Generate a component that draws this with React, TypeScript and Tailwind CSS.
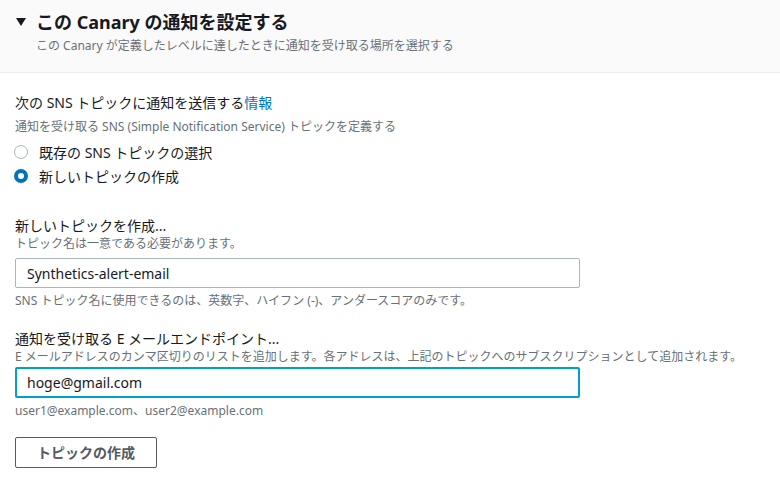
import { useState } from 'react';

const font = { fontFamily: '"Noto Sans", "Noto Sans CJK JP", sans-serif' };

function Radio({ checked, label, onClick }: { checked: boolean; label: string; onClick: () => void }) {
  return (
    <label className="flex h-6 cursor-pointer items-center" onClick={onClick}>
      <span
        className={
          checked
            ? 'ml-[14px] h-[14px] w-[14px] rounded-full border-[4px] border-[#0073bb] bg-white'
            : 'ml-[14px] h-[14px] w-[14px] rounded-full border border-[#aab7b8] bg-white'
        }
      />
      <span className="ml-[11px] text-[14px] text-[#16191f]">{label}</span>
    </label>
  );
}

export default function App() {
  const [mode, setMode] = useState<'existing' | 'new'>('new');
  const [topic, setTopic] = useState('Synthetics-alert-email');
  const [emails, setEmails] = useState('hoge@gmail.com');

  return (
    <div className="h-[480px] w-[780px] overflow-hidden bg-white" style={font}>
      {/* Header */}
      <div className="h-[73px] border-b border-[#eaeded] bg-[#fafafa] pl-4 pt-[9px]">
        <div className="flex items-center">
          <svg width="10" height="9" viewBox="0 0 10 9" className="mr-[10px]">
            <path d="M0 0h10L5 8z" fill="#16191f" />
          </svg>
          <h2 className="text-[18px] font-bold leading-[26px] text-[#16191f]">この Canary の通知を設定する</h2>
        </div>
        <p className="ml-[20px] mt-[2px] text-[12px] leading-[18px] text-[#687078]">
          この Canary が定義したレベルに達したときに通知を受け取る場所を選択する
        </p>
      </div>

      <div className="px-[15px] pt-[19px]">
        {/* SNS topic */}
        <div className="text-[14px] leading-[22px] text-[#16191f]">
          次の SNS トピックに通知を送信する<a className="text-[#0073bb]">情報</a>
        </div>
        <div className="mt-[4px] text-[12px] leading-[18px] text-[#687078]">
          通知を受け取る SNS (Simple Notification Service) トピックを定義する
        </div>
        <div className="-ml-[15px] mt-[4px] flex flex-col">
          <Radio checked={mode === 'existing'} label="既存の SNS トピックの選択" onClick={() => setMode('existing')} />
          <Radio checked={mode === 'new'} label="新しいトピックの作成" onClick={() => setMode('new')} />
        </div>

        {/* New topic */}
        <div className="mt-[28px] text-[14px] leading-[20px] text-[#16191f]">新しいトピックを作成...</div>
        <div className="text-[12px] leading-[16px] text-[#687078]">トピック名は一意である必要があります。</div>
        <input
          value={topic}
          onChange={(e) => setTopic(e.target.value)}
          className="mt-[6px] h-[30px] w-[565px] rounded-[2px] border border-[#aab7b8] px-[11px] text-[14px] text-[#16191f] outline-none"
        />
        <div className="mt-[5px] text-[12px] leading-[16px] text-[#687078]">
          SNS トピック名に使用できるのは、英数字、ハイフン (-)、アンダースコアのみです。
        </div>

        {/* Email endpoints */}
        <div className="mt-[20px] text-[14px] leading-[20px] text-[#16191f]">通知を受け取る E メールエンドポイント...</div>
        <div className="text-[12px] leading-[16px] text-[#687078]">
          E メールアドレスのカンマ区切りのリストを追加します。各アドレスは、上記のトピックへのサブスクリプションとして追加されます。
        </div>
        <input
          value={emails}
          onChange={(e) => setEmails(e.target.value)}
          className="mt-[2px] h-[31px] w-[565px] rounded-[2px] border-2 border-[#00a1c9] px-[10px] text-[14px] text-[#16191f] outline-none"
        />
        <div className="mt-[5px] text-[12px] leading-[16px] text-[#687078]">user1@example.com、user2@example.com</div>

        <button className="mt-[18px] h-[31px] w-[142px] rounded-[2px] border border-[#545b64] bg-white text-[14px] font-bold text-[#545b64]">
          トピックの作成
        </button>
      </div>
    </div>
  );
}
